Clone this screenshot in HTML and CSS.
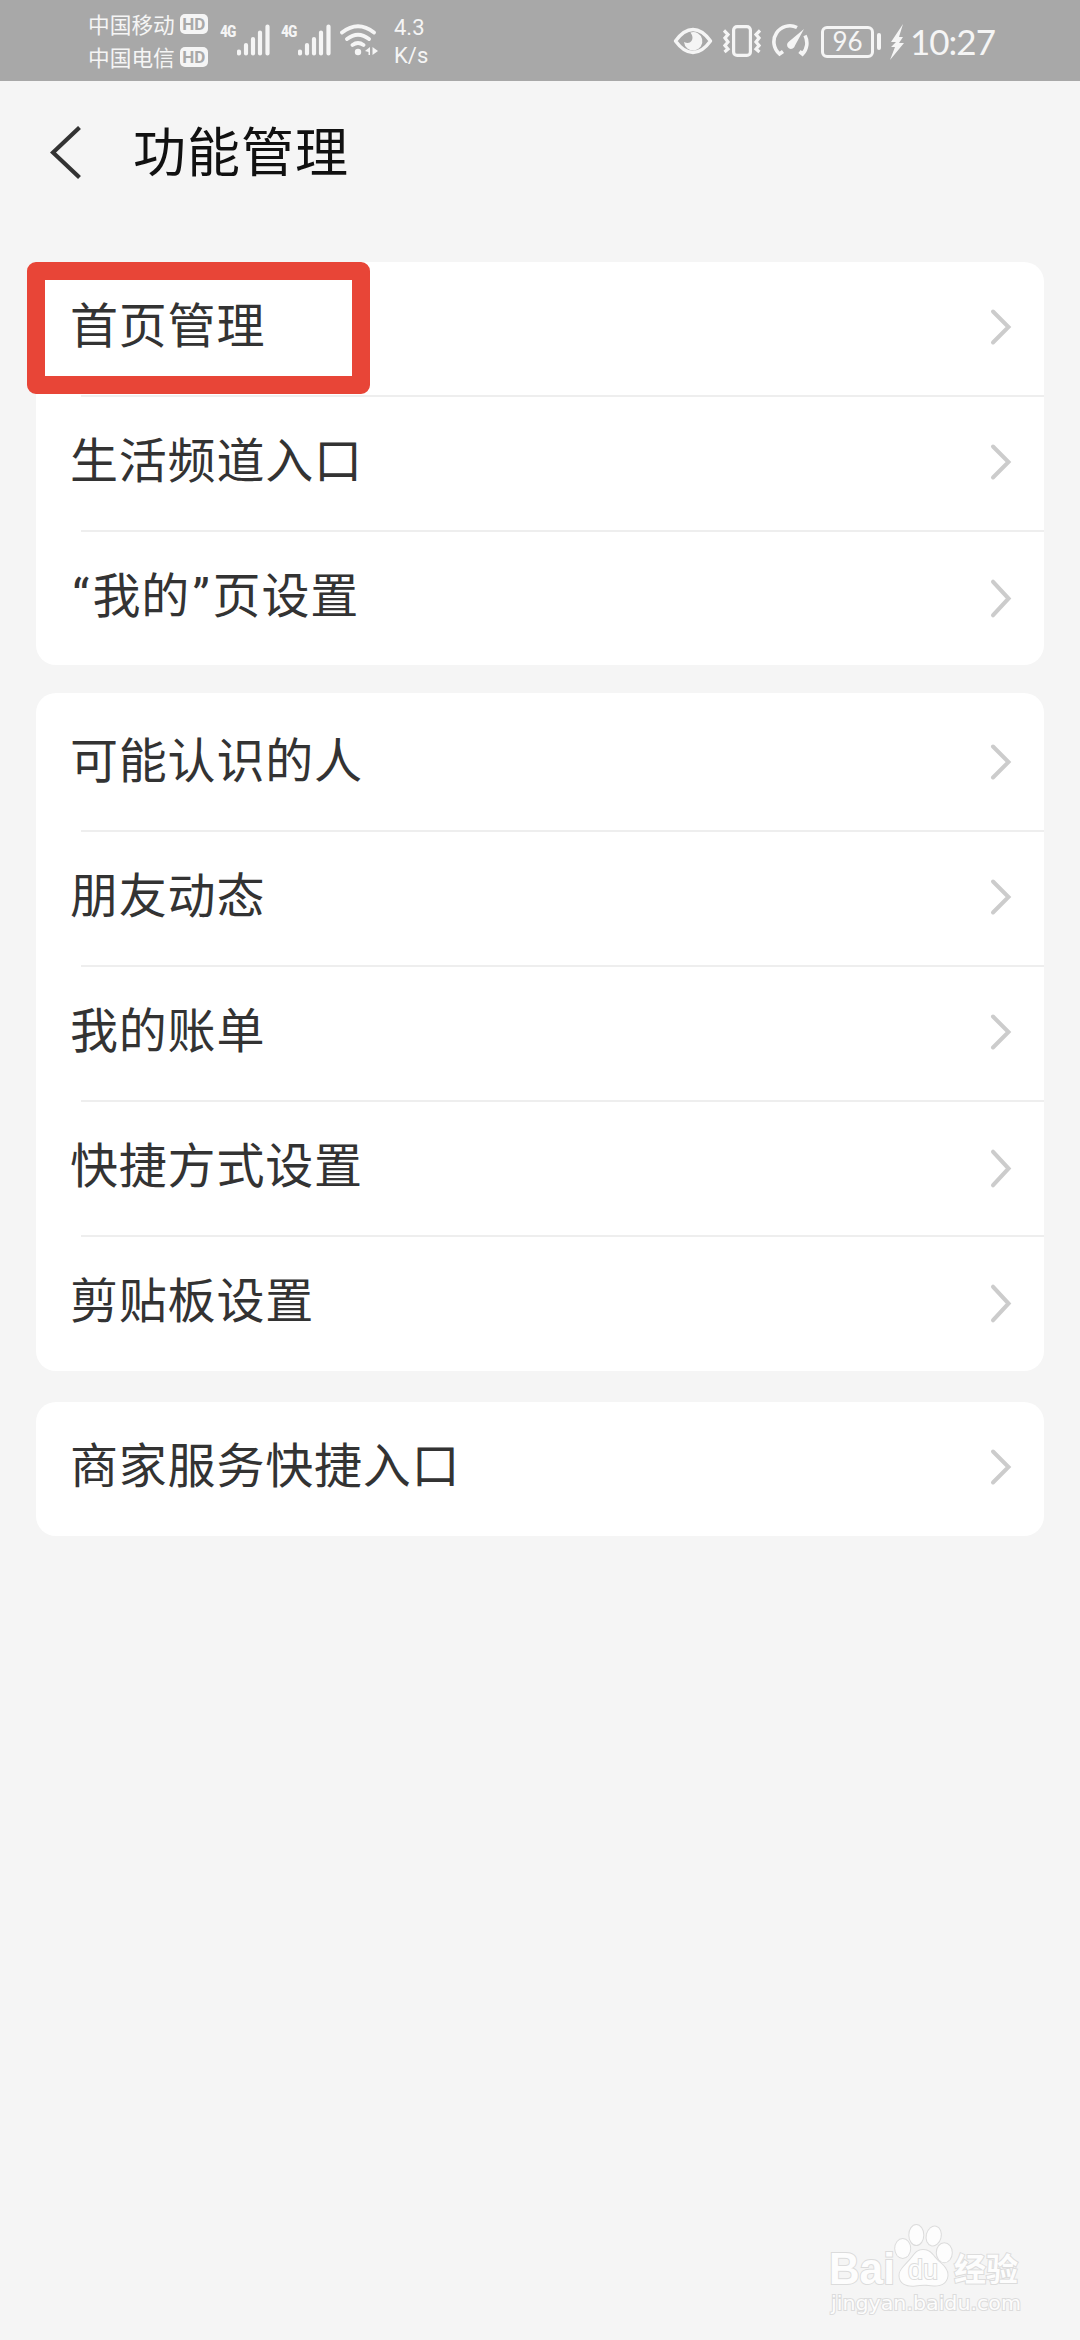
FILE: index.html
```html
<!DOCTYPE html>
<html lang="zh-CN">
<head>
<meta charset="utf-8">
<title>功能管理</title>
<link rel="stylesheet" href="styles.css">
</head>
<body>
<svg class="defs" width="0" height="0">
  <symbol id="chev" viewBox="0 0 24 40" preserveAspectRatio="none"><path d="M4 4.500 19.500 20 4 35.500" fill="none" stroke="#ccc" stroke-width="4" stroke-linecap="round"/></symbol>
</svg>
<header class="status">
  <div class="carriers">
    <div class="carrier">中国移动<span class="hd">HD</span></div>
    <div class="carrier">中国电信<span class="hd">HD</span></div>
  </div>
  <div class="signal"><span class="gen">4G</span><svg width="33" height="32" viewBox="0 0 33 32"><path d="M2 27.500v2M9 21v8.500M16 15v14.500M23 8.500v21M30.500 2.500v27" stroke="#f5f5f5" stroke-width="4.200" stroke-linecap="round"/></svg></div>
  <div class="signal"><span class="gen">4G</span><svg width="33" height="32" viewBox="0 0 33 32"><path d="M2 27.500v2M9 21v8.500M16 15v14.500M23 8.500v21M30.500 2.500v27" stroke="#f5f5f5" stroke-width="4.200" stroke-linecap="round"/></svg></div>
  <svg class="wifi" width="38" height="32" viewBox="0 0 38 32"><g fill="none" stroke="#f5f5f5" stroke-width="3.800" stroke-linecap="round"><path d="M2 8.500Q18 -4 34 8.500M7 15Q18 6.500 29 15M12.500 21Q18 17 23.500 21"/></g><circle cx="18" cy="28" r="3.200" fill="#f5f5f5"/><path d="M30 23v8h-1.500v-3L25 27zM32.500 23 38 27l-5.500 4z" fill="#f5f5f5"/></svg>
  <div class="speed">4.3<br>K/s</div>
  <div class="tray">
    <svg width="40" height="28" viewBox="0 0 40 28"><path d="M2.500 14C9 5 15 2.500 20 2.500s11 2.500 17.500 11.500C31 23 25 25.500 20 25.500S9 23 2.500 14z" fill="none" stroke="#f5f5f5" stroke-width="3.400" stroke-linejoin="round"/><path d="M17.500 5.500a9.200 9.200 0 1 1-6.500 9.500q5 2.500 7.500-1t-1-8.500z" fill="#f5f5f5"/></svg>
    <svg class="vib" width="38" height="32" viewBox="0 0 38 32"><g fill="none" stroke="#f5f5f5" stroke-width="3.200"><rect x="10.600" y="1.600" width="16.800" height="28.800" rx="3.500"/><path d="M1 5.500l4 4-3 3.500L5 17l-3 3.500L5 24l-3.500 3M37 5.500l-4 4 3 3.500-3 4 3 3.500-3 3.500 3.500 3"/></g></svg>
    <svg class="gauge" width="38" height="34" viewBox="0 0 38 34"><g fill="none" stroke="#f5f5f5" stroke-width="3.600"><path d="M25 3.500A16 16 0 0 0 7.500 30L11 27.500M33 11.500A16 16 0 0 1 30.500 30L27.500 27.500"/></g><path d="M32 5 23 21.500a4 4 0 1 1-6-4z" fill="#f5f5f5"/></svg>
    <span class="battery">96</span><span class="cap"></span>
    <svg class="bolt" width="14" height="36" viewBox="0 0 14 36"><path d="M13 0 1 18h5L1 23h4L0 36 14 19H9l4-6H9z" fill="#f5f5f5"/></svg>
    <span class="clock">10:27</span>
  </div>
</header>
<nav class="title">
  <svg width="32" height="54" viewBox="0 0 32 54"><path d="M29.500 1.500 3 26.500l26.500 25" fill="none" stroke="#333" stroke-width="4.200"/></svg>
  <h1>功能管理</h1>
</nav>
<main>
  <section class="card first">
    <div class="row"><span>首页管理</span><svg class="chev"><use href="#chev"/></svg><div class="mark"></div></div>
    <div class="row"><span>生活频道入口</span><svg class="chev"><use href="#chev"/></svg></div>
    <div class="row"><span><span class="quote">“</span>我的<span class="quote">”</span>页设置</span><svg class="chev tall"><use href="#chev"/></svg></div>
  </section>
  <section class="card second">
    <div class="row"><span>可能认识的人</span><svg class="chev"><use href="#chev"/></svg></div>
    <div class="row"><span>朋友动态</span><svg class="chev"><use href="#chev"/></svg></div>
    <div class="row"><span>我的账单</span><svg class="chev"><use href="#chev"/></svg></div>
    <div class="row"><span>快捷方式设置</span><svg class="chev tall"><use href="#chev"/></svg></div>
    <div class="row"><span>剪贴板设置</span><svg class="chev tall"><use href="#chev"/></svg></div>
  </section>
  <section class="card third">
    <div class="row"><span>商家服务快捷入口</span><svg class="chev"><use href="#chev"/></svg></div>
  </section>
</main>
<svg class="watermark" width="210" height="110" viewBox="0 0 210 110">
  <g class="wm">
    <text x="3" y="69" class="wm-brand" textLength="66" lengthAdjust="spacingAndGlyphs">Bai</text>
    <ellipse cx="76.700" cy="33.500" rx="7.500" ry="9.500"/>
    <ellipse cx="90.300" cy="20" rx="7" ry="10"/>
    <ellipse cx="107.700" cy="21" rx="7" ry="9.500" transform="rotate(14 107.700 21)"/>
    <ellipse cx="118.300" cy="37.700" rx="7.500" ry="9.500"/>
    <path d="M97 35c8 0 10 6 15 11 6 5 10 9 9.500 15-1 8-8 10-14 9.500-7-1-12-1-18 0-9 1-16-2-16-10 0-6 5-9 10-15 5-5 6-10.500 13.500-10.500z"/>
    <text x="82" y="64" class="wm-du" textLength="30" lengthAdjust="spacingAndGlyphs">du</text>
    <text x="128" y="66" class="wm-cn">经验</text>
    <text x="5" y="95" class="wm-url" textLength="190" lengthAdjust="spacingAndGlyphs">jingyan.baidu.com</text>
  </g>
</svg>
</body>
</html>
```
FILE: styles.css
```css
* { box-sizing: border-box; }
body {
  margin: 0;
  width: 1080px;
  height: 2340px;
  overflow: hidden;
  display: flex;
  flex-direction: column;
  background: #f5f5f5;
  color: #333;
  font-family: "Noto Sans CJK SC", sans-serif;
}
svg { display: block; flex: none; }
.defs { position: absolute; }
.status {
  height: 81px;
  flex: none;
  display: flex;
  align-items: flex-start;
  padding-left: 88px;
  background: #a8a8a8;
  color: #f5f5f5;
}
.carriers { width: 132px; padding-top: 8px; }
.carrier {
  display: flex;
  align-items: center;
  height: 33px;
  padding-bottom: 1px;
  font-size: 21.700px;
  line-height: 32px;
  white-space: nowrap;
}
.hd {
  width: 28px;
  height: 20px;
  margin-left: 5px;
  border-radius: 5px;
  background: #f5f5f5;
  color: #a8a8a8;
  font: bold 17px/21px Roboto, sans-serif;
  text-align: center;
}
.signal { display: flex; padding-top: 24px; width: 61px; }
.gen { width: 17px; font: bold 16px/16px "Roboto Condensed", Roboto, sans-serif; letter-spacing: -1px; }
.wifi { margin: 24px 0 0 -2px; }
.speed { margin: 14px 0 0 16px; width: 60px; font: 22px/27.500px Roboto, sans-serif; }
.tray { display: flex; align-items: center; height: 81px; margin-left: 219px; }
.vib { margin-left: 10px; }
.gauge { margin-left: 11px; }
.battery {
  width: 53px;
  height: 32px;
  margin: 2px 0 0 11px;
  border: 3px solid #f5f5f5;
  border-radius: 6px;
  font: 26px/25px Lato, sans-serif;
  text-align: center;
}
.cap { width: 4px; height: 17px; margin: 2px 0 0 3px; border-radius: 2px; background: #f5f5f5; }
.bolt { margin: 2px 0 0 9px; }
.clock { margin: 0 0 0 6px; font: 35px/40px Lato, sans-serif; letter-spacing: -1px; }
.title { height: 181px; flex: none; display: flex; align-items: flex-start; padding: 45px 0 0 50px; }
.title h1 {
  margin: -12px 0 0 51px;
  font-size: 53px;
  font-weight: 400;
  line-height: 70px;
  letter-spacing: 1px;
  color: #111;
}
main { padding: 0 36px; }
.card { border-radius: 20px; background: #fff; }
.first { height: 403px; }
.second { height: 678px; margin-top: 28px; padding-top: 4px; }
.third { height: 134px; margin-top: 31px; }
.row {
  position: relative;
  display: flex;
  justify-content: space-between;
  height: 135px;
  padding: 25px 31px 0 34px;
  font-size: 48px;
  line-height: 70px;
  letter-spacing: .8px;
}
.quote {
  display: inline-block;
  width: 22.500px;
  font-family: Roboto, sans-serif;
  line-height: 48px;
  text-align: center;
}
.row:not(:last-child)::after {
  content: "";
  position: absolute;
  left: 45px;
  right: 0;
  bottom: 0;
  height: 2px;
  background: #eee;
}
.chev { width: 24px; height: 40px; margin-top: 20px; }
.chev.tall { height: 43px; }
.mark {
  position: absolute;
  left: -9px;
  top: 0;
  width: 343px;
  height: 132px;
  border: 18px solid #e84537;
  border-radius: 9px;
  z-index: 1;
}
.watermark { position: absolute; left: 826px; top: 2215px; }
.wm { fill: #fdfdfd; stroke: #dcdcdc; stroke-width: 2px; paint-order: stroke; }
.wm-brand { font: bold 44px "Liberation Sans", sans-serif; }
.wm-du { font: 28px "Liberation Sans", sans-serif; }
.wm-cn { font: bold 32px "Noto Sans CJK SC", sans-serif; }
.wm-url { font: 20px "DejaVu Sans", sans-serif; }
```
